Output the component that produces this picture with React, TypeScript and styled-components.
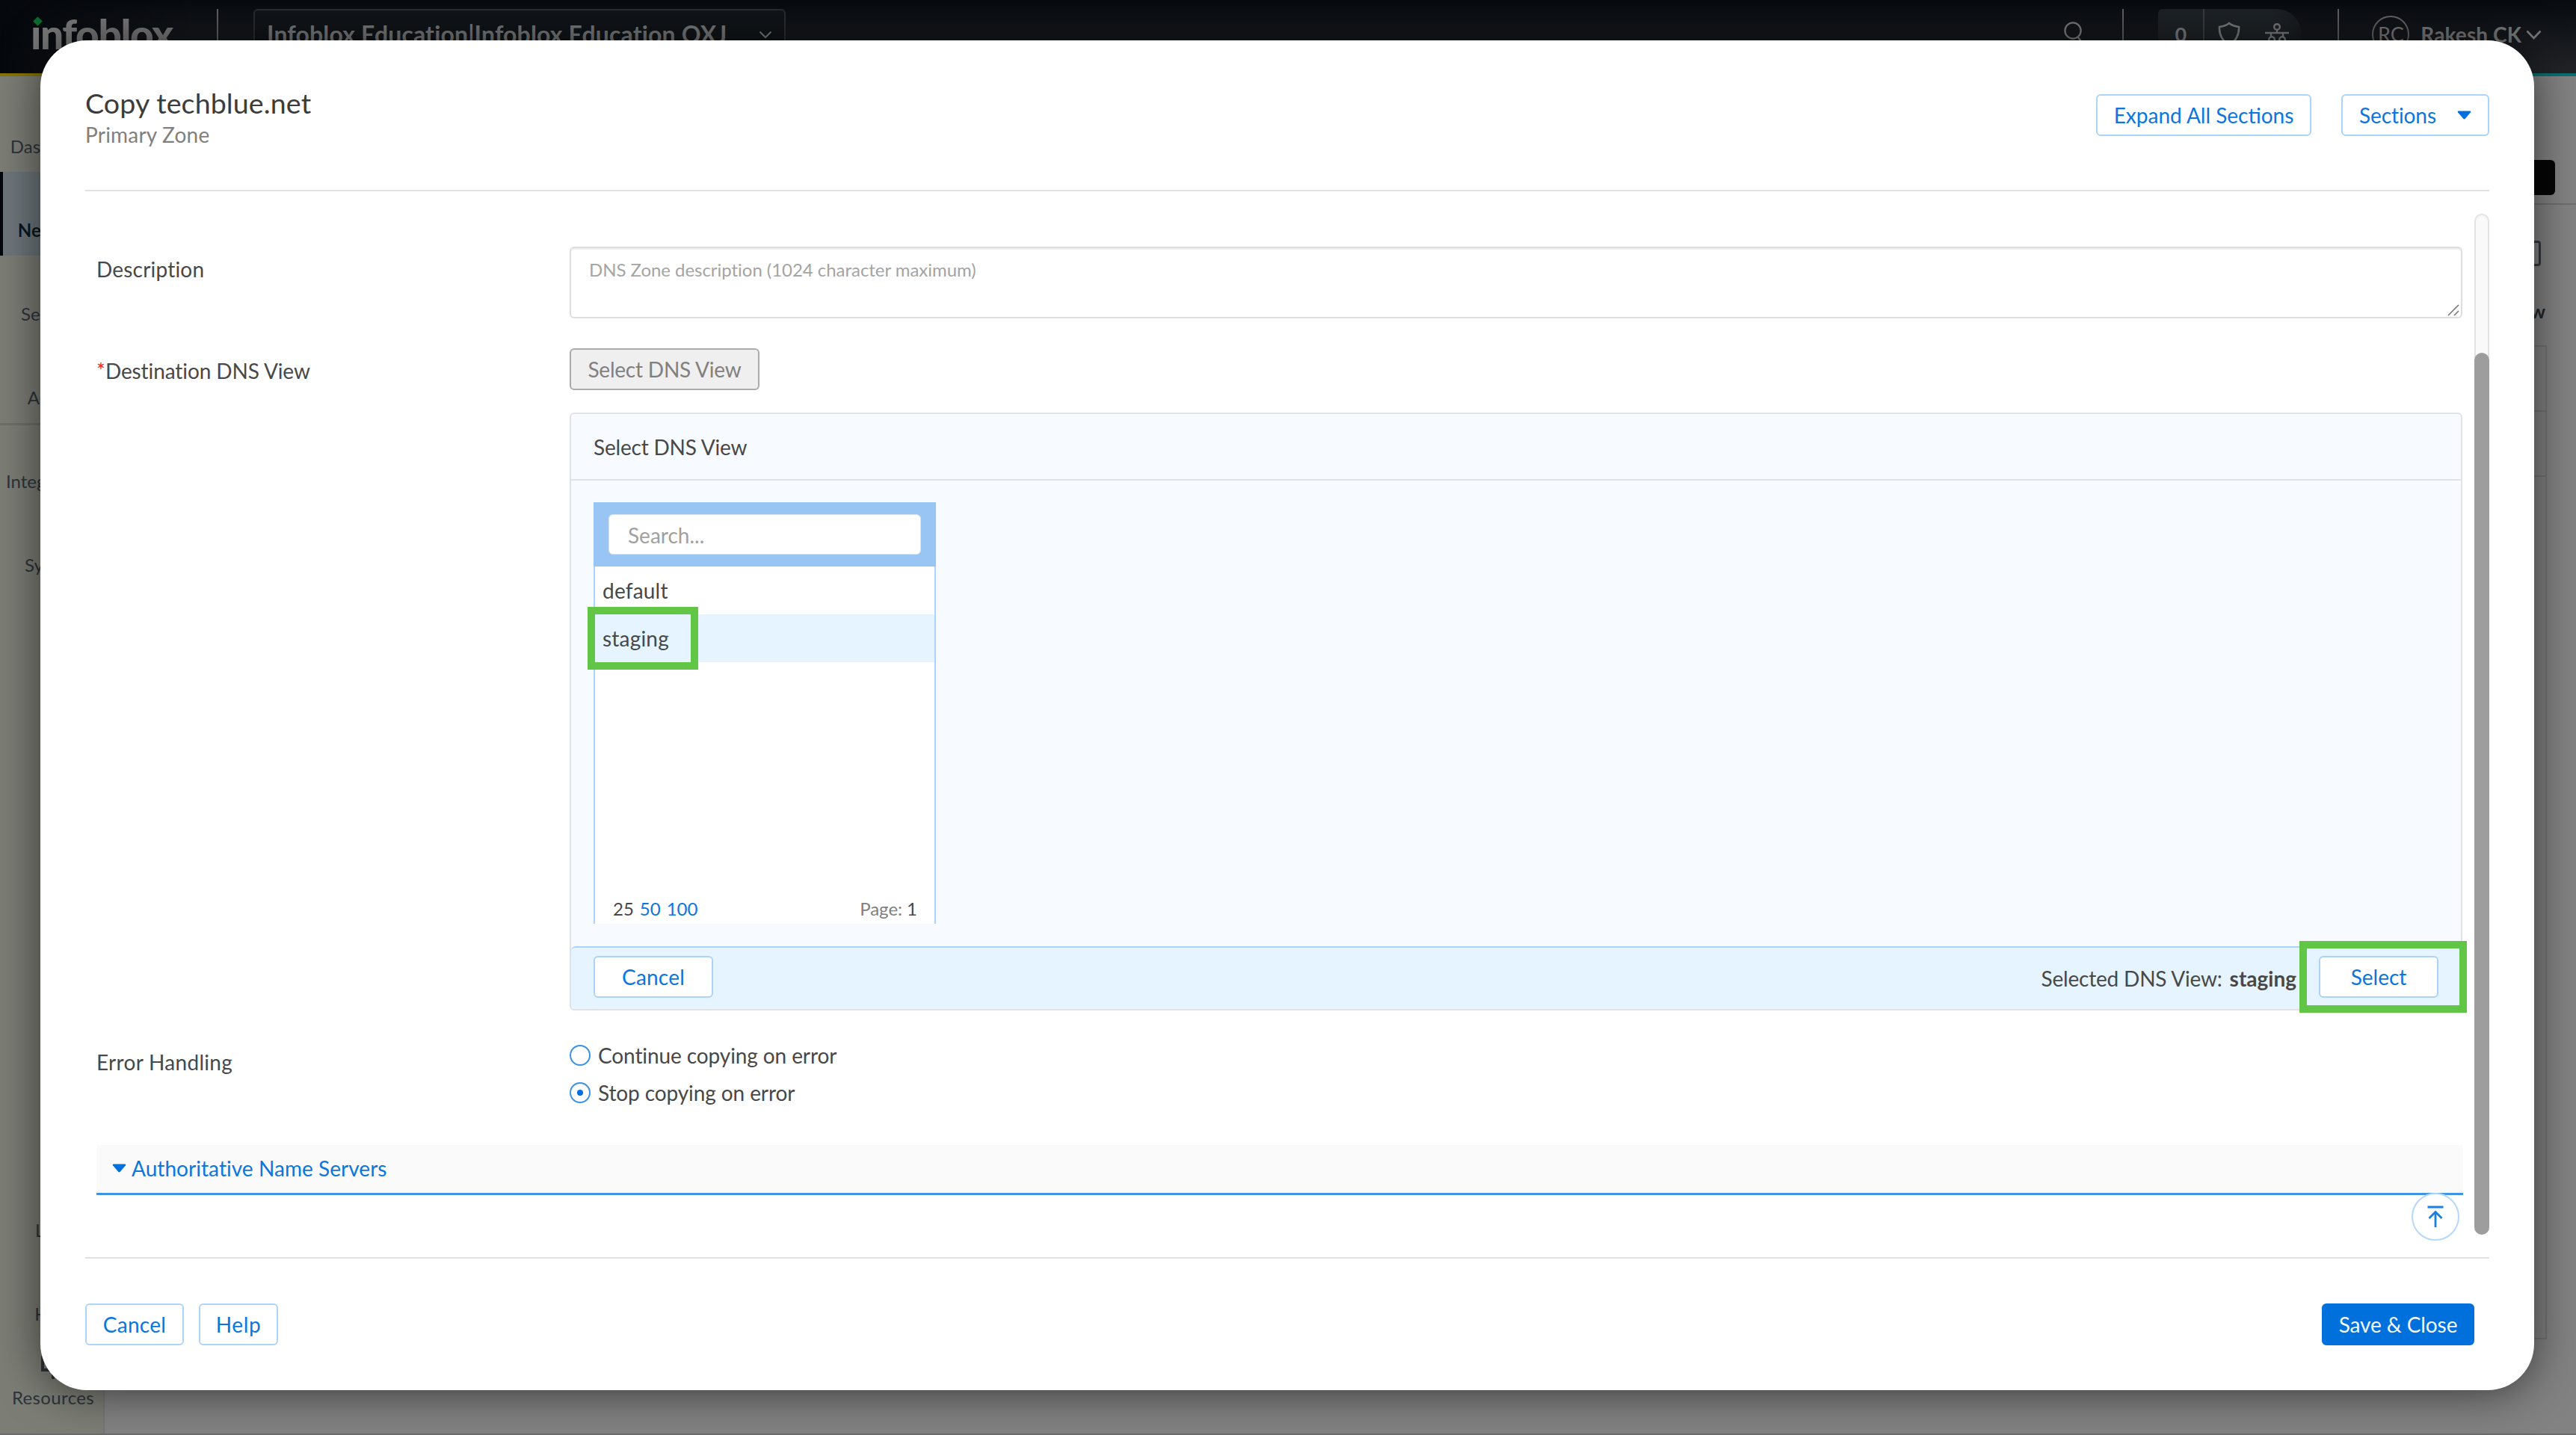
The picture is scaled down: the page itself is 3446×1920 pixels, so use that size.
import React from "react";
import styled, { createGlobalStyle, css } from "styled-components";
import { Activity, Network, ShieldCheck, Settings, Puzzle, LayoutGrid, List, CircleHelp } from "lucide-react";

const blue = "#0b76de";
const blueBorder = "#acd3f9";
const ink = "#484848";
const green = "#61c546";
const paleBlue = "#e5f4fe";

const GlobalStyle = createGlobalStyle`
  *, *::before, *::after { box-sizing: border-box; }
  body { margin: 0; overflow: hidden; background: #828282; }
  button { font-family: inherit; margin: 0; }
`;

const Page = styled.div`
  position: relative;
  width: 3446px;
  height: 1920px;
  display: flex;
  flex-direction: column;
  overflow: hidden;
  background: #828282;
  font-family: Lato, "Open Sans", sans-serif;
  font-size: 28px;
  line-height: 34px;
  color: ${ink};
`;

const Text = styled.span<{ $ls?: number; $size?: number; $color?: string; $bold?: boolean }>`
  white-space: nowrap;
  letter-spacing: ${(p) => p.$ls ?? 0}px;
  ${(p) => p.$size && css`font-size: ${p.$size}px;`}
  ${(p) => p.$color && css`color: ${p.$color};`}
  ${(p) => p.$bold && css`font-weight: 700;`}
`;

/* ---------- top bar ---------- */

const TopBar = styled.header`
  height: 102px;
  flex: none;
  display: flex;
  align-items: center;
  padding: 0 46px 6px 41px;
  background:
    linear-gradient(90deg, #05080c 0, rgba(5, 8, 12, 0) 260px),
    linear-gradient(180deg, #070b10 0, #202226 90px);
  border-bottom: 4px solid;
  border-image: linear-gradient(90deg, #867404 0%, #4c7a3c 50%, #0b6e70 96%) 1;
  color: #777879;
`;

const Logo = styled.div`
  position: relative;
  width: 249px;
  font-size: 55px;
  line-height: 66px;
  font-weight: 900;
  letter-spacing: -1.4px;
  color: #787878;
  margin-top: -3px;
`;

const LogoDot = styled.i`
  position: absolute;
  left: 5px;
  top: 12px;
  width: 9px;
  height: 9px;
  background: #0b6b2e;
  transform: rotate(45deg);
`;

const Rule = styled.i<{ $gap?: number }>`
  width: 2px;
  height: 68px;
  background: #5e5f61;
  margin-right: ${(p) => p.$gap ?? 0}px;
`;

const AccountSelect = styled.div`
  width: 712px;
  height: 68px;
  display: flex;
  align-items: center;
  justify-content: space-between;
  padding: 0 16px 0 16px;
  border: 2px solid #2a2d30;
  border-radius: 6px;
  background: #101418;
  font-size: 32px;
  font-weight: 700;
`;

const Spacer = styled.div`
  flex: 1;
`;

const SearchSlot = styled.div`
  display: flex;
  width: 78px;
  margin-bottom: 3px;
`;

const StatusPill = styled.div`
  display: flex;
  align-items: center;
  height: 68px;
  width: 192px;
  margin-right: 48px;
  border-radius: 6px 34px 34px 6px;
  background: linear-gradient(90deg, #1d2226 80%, #181b1f 100%);
`;

const PillCell = styled.div<{ $w: number; $line?: boolean }>`
  width: ${(p) => p.$w}px;
  height: 68px;
  display: flex;
  align-items: center;
  justify-content: center;
  border-right: ${(p) => (p.$line ? "2px solid #3a3d40" : "none")};
`;

const Avatar = styled.div`
  width: 50px;
  height: 50px;
  display: flex;
  align-items: center;
  justify-content: center;
  border: 2px solid #626364;
  border-radius: 50%;
  margin-right: 15px;
  font-size: 27px;
`;

const UserName = styled(Text)`
  margin-right: 6px;
`;

/* ---------- page behind the dialog ---------- */

const Backdrop = styled.div`
  flex: 1;
  display: flex;
  min-height: 0;
  border-bottom: 2px solid #6b6b6b;
`;

const Sidebar = styled.nav`
  width: 140px;
  flex: none;
  display: flex;
  flex-direction: column;
  padding-top: 16px;
  background: #7c7d75;
  border-right: 2px solid #767676;
`;

const NavItem = styled.div<{ $active?: boolean; $line?: boolean; $top?: number }>`
  height: 112px;
  flex: none;
  display: flex;
  flex-direction: column;
  align-items: center;
  justify-content: flex-end;
  gap: 6px;
  padding-bottom: 19px;
  margin-top: ${(p) => p.$top ?? 0}px;
  border-left: 4px solid ${(p) => (p.$active ? "#04070d" : "transparent")};
  background: ${(p) => (p.$active ? "#6d767b" : "transparent")};
  box-shadow: ${(p) => (p.$line ? "0 3px 0 #6f706a" : "none")};
  font-size: 24px;
  line-height: 30px;
  font-weight: ${(p) => (p.$active ? 700 : 400)};
  color: ${(p) => (p.$active ? "#10161c" : "#2d343a")};
`;

const Content = styled.main`
  flex: 1;
  display: flex;
  flex-direction: column;
`;

const Toolbar = styled.div`
  height: 172px;
  flex: none;
  display: flex;
  justify-content: flex-end;
  padding: 112px 28px 0 0;
  border-bottom: 2px solid #6e6e6e;
`;

const DarkButton = styled.div`
  width: 160px;
  height: 47px;
  border-radius: 6px;
  background: #060607;
`;

const Tools = styled.div`
  height: 188px;
  flex: none;
  display: flex;
  flex-direction: column;
  align-items: flex-end;
  padding: 48px 41px 0 0;
  font-size: 25px;
  font-weight: 700;
  color: #23272b;
`;

const ToolBox = styled.div`
  width: 36px;
  height: 34px;
  margin: 0 6px 43px 0;
  border: 3px solid #33373c;
  border-radius: 4px;
`;

const Table = styled.div`
  margin: 0 39px 0 40px;
  height: 1330px;
  border: 2px solid #737373;
`;

const TableRow = styled.div`
  height: 87px;
  border-bottom: 2px solid #737373;
`;

/* ---------- dialog ---------- */

const Overlay = styled.div`
  position: absolute;
  inset: 0;
  padding: 54px 56px 60px 54px;
  display: flex;
`;

const Dialog = styled.section`
  flex: 1;
  display: flex;
  flex-direction: column;
  padding: 0 60px;
  border-radius: 62px;
  background: #fff;
  box-shadow: 0 2px 60px rgba(0, 0, 0, 0.58);
`;

const DialogHeader = styled.header`
  height: 202px;
  flex: none;
  display: flex;
  align-items: flex-start;
  justify-content: space-between;
  padding-top: 60px;
  border-bottom: 2px solid #e1e1e1;
`;

const Titles = styled.div`
  display: flex;
  flex-direction: column;
`;

const Title = styled.h1`
  margin: 0;
  font-size: 37.6px;
  line-height: 48px;
  font-weight: 400;
  letter-spacing: 0.1px;
  color: #3c3c3c;
`;

const Subtitle = styled.div`
  line-height: 36px;
  color: #808080;
`;

const ButtonRow = styled.div<{ $gap: number }>`
  display: flex;
  gap: ${(p) => p.$gap}px;
`;

const Button = styled.button<{ $w: number; $kind?: "primary" | "disabled" }>`
  width: ${(p) => p.$w}px;
  height: 56px;
  padding: 0;
  display: flex;
  align-items: center;
  justify-content: center;
  gap: 28px;
  border: 2px solid ${blueBorder};
  border-radius: 6px;
  background: #fff;
  color: ${blue};
  font-size: 28px;
  line-height: 34px;
  ${(p) => p.$kind === "primary" && css`
    border-color: #0070dc;
    background: #0070dc;
    color: #f2f8ff;
  `}
  ${(p) => p.$kind === "disabled" && css`
    border-color: #ababab;
    background: #efefef;
    color: #808080;
  `}
`;

const HeaderButtons = styled(ButtonRow)`
  padding-top: 12px;
`;

const DialogBody = styled.div`
  position: relative;
  flex: 1;
  display: flex;
  justify-content: space-between;
  padding-left: 15px;
`;

const Form = styled.div`
  width: 3166px;
  padding-top: 74px;
`;

const Field = styled.div<{ $mt?: number }>`
  display: grid;
  grid-template-columns: 633px 2532px;
  margin-top: ${(p) => p.$mt ?? 0}px;
`;

const Label = styled.div<{ $pt: number }>`
  padding-top: ${(p) => p.$pt}px;
`;

const Required = styled.span`
  color: #f5222d;
`;

const TextArea = styled.div`
  height: 96px;
  display: flex;
  justify-content: space-between;
  padding: 12px 2px 1px 24px;
  border: 2px solid #dedede;
  border-radius: 6px;
  box-shadow: inset 0 2px 1px #ededed;
`;

const Grip = styled.svg`
  align-self: flex-end;
`;

const Panel = styled.div`
  margin-top: 30px;
  height: 800px;
  display: flex;
  flex-direction: column;
  border: 2px solid #dfe3e7;
  border-radius: 6px;
  background: #f7faff;
`;

const PanelHeader = styled.div`
  height: 89px;
  display: flex;
  align-items: center;
  padding-left: 30px;
  border-bottom: 2px solid #dfe3e7;
`;

const PanelBody = styled.div`
  flex: 1;
  padding: 29px 30px 0;
`;

const ViewList = styled.div`
  width: 458px;
  height: 564px;
  display: flex;
  flex-direction: column;
  border: solid ${blueBorder};
  border-width: 0 2px;
  background: #fff;
`;

const ListHeader = styled.div`
  height: 86px;
  flex: none;
  margin: 0 -2px;
  padding: 16px 20px;
  background: #98c5f3;
`;

const SearchBox = styled.div`
  height: 54px;
  display: flex;
  align-items: center;
  padding: 1px 0 0 25px;
  border: 1px solid #d8e3ee;
  border-radius: 6px;
  background: #fff;
  color: #a0a0a0;
`;

const ViewRow = styled.div<{ $selected?: boolean }>`
  position: relative;
  height: 64px;
  display: flex;
  align-items: center;
  padding-left: 10px;
  background: ${(p) => (p.$selected ? paleBlue : "transparent")};
`;

const Highlight = styled.i<{ $x: number; $y: number; $w: number; $h: number }>`
  position: absolute;
  left: ${(p) => p.$x}px;
  top: ${(p) => p.$y}px;
  width: ${(p) => p.$w}px;
  height: ${(p) => p.$h}px;
  border: 10px solid ${green};
`;

const Pager = styled.div`
  margin-top: auto;
  display: flex;
  justify-content: space-between;
  padding: 0 23px 5px 24px;
  font-size: 24px;
  line-height: 30px;
`;

const PagerGroup = styled.div<{ $gap: number }>`
  display: flex;
  gap: ${(p) => p.$gap}px;
`;

const PanelFooter = styled.div`
  height: 84px;
  display: flex;
  justify-content: space-between;
  align-items: flex-start;
  padding: 11px 30px 0;
  border-top: 2px solid ${blueBorder};
  border-radius: 6px 6px 4px 4px;
  background: ${paleBlue};
`;

const Selection = styled.div`
  display: flex;
  align-items: center;
`;

const SelectionText = styled.div`
  display: flex;
  gap: 10px;
  padding-top: 3px;
`;

const SelectSlot = styled.div`
  position: relative;
  margin-left: 30px;
`;

const Radios = styled.div`
  display: flex;
  flex-direction: column;
  gap: 16px;
`;

const RadioRow = styled.div`
  display: flex;
  align-items: center;
  gap: 10px;
`;

const Radio = styled.i<{ $checked?: boolean }>`
  width: 28px;
  height: 28px;
  display: flex;
  align-items: center;
  justify-content: center;
  border: 2px solid #3a92e8;
  border-radius: 50%;
  background: #fff;
  &::after {
    content: "";
    display: ${(p) => (p.$checked ? "block" : "none")};
    width: 8px;
    height: 8px;
    border-radius: 50%;
    background: #0070dc;
  }
`;

const SectionBar = styled.div`
  margin-top: 53px;
  height: 67px;
  display: flex;
  align-items: center;
  gap: 7px;
  padding: 0 0 2px 21px;
  border-bottom: 3px solid #3f94e6;
  background: #fafafa;
  color: ${blue};
`;

const Track = styled.div`
  width: 20px;
  height: 1366px;
  margin-top: 30px;
  padding-top: 184px;
  border: 2px solid #e2e2e2;
  border-radius: 10px;
  background: #f9f9f9;
`;

const Thumb = styled.div`
  width: 20px;
  height: 1180px;
  margin-left: -2px;
  border-radius: 10px;
  background: #9d9d9d;
`;

const ToTop = styled.button`
  position: absolute;
  right: 40px;
  top: 1340px;
  width: 64px;
  height: 64px;
  padding: 0;
  display: flex;
  align-items: center;
  justify-content: center;
  border: 2px solid #b5d8fa;
  border-radius: 50%;
  background: #fff;
`;

const DialogFooter = styled.footer`
  height: 178px;
  flex: none;
  display: flex;
  justify-content: space-between;
  padding: 60px 20px 0 0;
  border-top: 2px solid #e1e1e1;
`;

const Chevron = ({ w, h, sw }: { w: number; h: number; sw: number }) => (
  <svg width={w} height={h} viewBox={`0 0 ${w} ${h}`} fill="none" stroke="currentColor" strokeWidth={sw}>
    <path d={`M1.5 1.5 L${w / 2} ${h - 2} L${w - 1.5} 1.5`} />
  </svg>
);

const Caret = () => (
  <svg width="19" height="12" viewBox="0 0 19 12">
    <path d="M1.6 0.6 H17.4 Q18.8 0.8 18 2.2 L10.8 10.8 Q9.5 12 8.2 10.8 L1 2.2 Q0.2 0.8 1.6 0.6 Z" fill="#0070dc" />
  </svg>
);

const nav = [
  { label: "Dashboard", Icon: Activity },
  { label: "Network", Icon: Network, active: true },
  { label: "Security", Icon: ShieldCheck },
  { label: "Admin", Icon: Settings, line: true },
  { label: "Integrations", Icon: Puzzle },
  { label: "System", Icon: LayoutGrid },
  { label: "Logs", Icon: List, top: 778 },
  { label: "Help", Icon: CircleHelp },
];

export default function App() {
  return (
    <>
      <GlobalStyle />
      <Page>
        <TopBar>
          <Logo>
            ınfoblox
            <LogoDot />
          </Logo>
          <Rule $gap={47} />
          <AccountSelect>
            <Text $ls={0.14}>Infoblox Education|Infoblox Education OXJ</Text>
            <Chevron w={18} h={11} sw={2} />
          </AccountSelect>
          <Spacer />
          <SearchSlot>
            <svg width="28" height="32" viewBox="0 0 28 32" fill="none" stroke="currentColor" strokeWidth="2.4">
              <circle cx="12" cy="12" r="10.6" />
              <path d="M18.5 20.5 L26 30" />
            </svg>
          </SearchSlot>
          <Rule $gap={46} />
          <StatusPill>
            <PillCell $w={62} $line>
              <Text $bold $size={27}>0</Text>
            </PillCell>
            <PillCell $w={65}>
              <svg width="30" height="34" viewBox="0 0 30 34" fill="none" stroke="currentColor" strokeWidth="2.6">
                <path d="M15 2 Q20 6 28 7 Q29 22 15 32 Q1 22 2 7 Q10 6 15 2 Z" />
              </svg>
            </PillCell>
            <PillCell $w={64}>
              <svg width="34" height="30" viewBox="0 0 34 30" fill="none" stroke="currentColor" strokeWidth="2.4">
                <circle cx="17" cy="5" r="3.8" />
                <path d="M17 9 V13 M1 13 H33 M9 13 V18 M25 13 V18" />
                <circle cx="10" cy="22" r="3.8" />
                <circle cx="24" cy="22" r="3.8" />
              </svg>
            </PillCell>
          </StatusPill>
          <Rule $gap={44} />
          <Avatar>RC</Avatar>
          <UserName $bold $ls={0.1}>Rakesh CK</UserName>
          <Chevron w={21} h={13} sw={2.6} />
        </TopBar>

        <Backdrop>
          <Sidebar>
            {nav.map(({ label, Icon, active, line, top }) => (
              <NavItem key={label} $active={active} $line={line} $top={top}>
                <Icon size={34} strokeWidth={1.8} />
                <Text>{label}</Text>
              </NavItem>
            ))}
            <NavItem>
              <svg width="32" height="36" viewBox="0 0 32 36" fill="none" stroke="currentColor" strokeWidth="4">
                <path d="M2 3 H30 V20 H2 Z M16 20 V32" />
              </svg>
              <Text $ls={0.35}>Resources</Text>
            </NavItem>
          </Sidebar>
          <Content>
            <Toolbar>
              <DarkButton />
            </Toolbar>
            <Tools>
              <ToolBox />
              <Text>View</Text>
            </Tools>
            <Table>
              <TableRow />
              <TableRow />
            </Table>
          </Content>
        </Backdrop>

        <Overlay>
          <Dialog>
            <DialogHeader>
              <Titles>
                <Title>Copy techblue.net</Title>
                <Subtitle>
                  <Text $ls={0.2}>Primary Zone</Text>
                </Subtitle>
              </Titles>
              <HeaderButtons $gap={40}>
                <Button $w={288}>
                  <Text>Expand All Sections</Text>
                </Button>
                <Button $w={198}>
                  <Text $ls={-0.1}>Sections</Text>
                  <Caret />
                </Button>
              </HeaderButtons>
            </DialogHeader>

            <DialogBody>
              <Form>
                <Field>
                  <Label $pt={13}>
                    <Text $ls={0.2}>Description</Text>
                  </Label>
                  <TextArea>
                    <Text $size={24} $ls={-0.04} $color="#a4a4a4">DNS Zone description (1024 character maximum)</Text>
                    <Grip width="16" height="16" viewBox="0 0 16 16" stroke="#777" strokeWidth="1.6">
                      <path d="M1 15 L15 1 M9 15 L15 9" />
                    </Grip>
                  </TextArea>
                </Field>

                <Field $mt={40}>
                  <Label $pt={13}>
                    <Required>*</Required>
                    <Text $ls={-0.1}>Destination DNS View</Text>
                  </Label>
                  <div>
                    <Button $w={254} $kind="disabled">
                      <Text $ls={-0.2}>Select DNS View</Text>
                    </Button>
                    <Panel>
                      <PanelHeader>
                        <Text $ls={-0.2}>Select DNS View</Text>
                      </PanelHeader>
                      <PanelBody>
                        <ViewList>
                          <ListHeader>
                            <SearchBox>
                              <Text>Search...</Text>
                            </SearchBox>
                          </ListHeader>
                          <ViewRow>
                            <Text $ls={0.2}>default</Text>
                          </ViewRow>
                          <ViewRow $selected>
                            <Text $ls={0.2}>staging</Text>
                            <Highlight $x={-10} $y={-10} $w={148} $h={84} />
                          </ViewRow>
                          <Pager>
                            <PagerGroup $gap={8}>
                              <Text>25</Text>
                              <Text $color={blue}>50</Text>
                              <Text $color={blue}>100</Text>
                            </PagerGroup>
                            <PagerGroup $gap={6}>
                              <Text $color="#808080">Page:</Text>
                              <Text>1</Text>
                            </PagerGroup>
                          </Pager>
                        </ViewList>
                      </PanelBody>
                      <PanelFooter>
                        <Button $w={160}>
                          <Text $ls={0.2}>Cancel</Text>
                        </Button>
                        <Selection>
                          <SelectionText>
                            <Text $ls={-0.2}>Selected DNS View:</Text>
                            <Text $bold>staging</Text>
                          </SelectionText>
                          <SelectSlot>
                            <Button $w={160}>
                              <Text>Select</Text>
                            </Button>
                            <Highlight $x={-26} $y={-20} $w={224} $h={96} />
                          </SelectSlot>
                        </Selection>
                      </PanelFooter>
                    </Panel>
                  </div>
                </Field>

                <Field $mt={43}>
                  <Label $pt={9}>
                    <Text $ls={0.3}>Error Handling</Text>
                  </Label>
                  <Radios>
                    <RadioRow>
                      <Radio />
                      <Text $ls={-0.1}>Continue copying on error</Text>
                    </RadioRow>
                    <RadioRow>
                      <Radio $checked />
                      <Text $ls={-0.1}>Stop copying on error</Text>
                    </RadioRow>
                  </Radios>
                </Field>

                <SectionBar>
                  <Caret />
                  <Text $ls={0.05}>Authoritative Name Servers</Text>
                </SectionBar>
              </Form>
              <Track>
                <Thumb />
              </Track>
              <ToTop>
                <svg width="22" height="30" viewBox="0 0 22 30" fill="none" stroke="#1a7fe2" strokeWidth="2.8">
                  <path d="M0.5 2 H21.5 M11 29 V9 M2.5 17 L11 8.5 L19.5 17" />
                </svg>
              </ToTop>
            </DialogBody>

            <DialogFooter>
              <ButtonRow $gap={20}>
                <Button $w={132}>
                  <Text $ls={0.3}>Cancel</Text>
                </Button>
                <Button $w={106}>
                  <Text $ls={0.6}>Help</Text>
                </Button>
              </ButtonRow>
              <Button $w={204} $kind="primary">
                <Text $ls={-0.1}>Save &amp; Close</Text>
              </Button>
            </DialogFooter>
          </Dialog>
        </Overlay>
      </Page>
    </>
  );
}
